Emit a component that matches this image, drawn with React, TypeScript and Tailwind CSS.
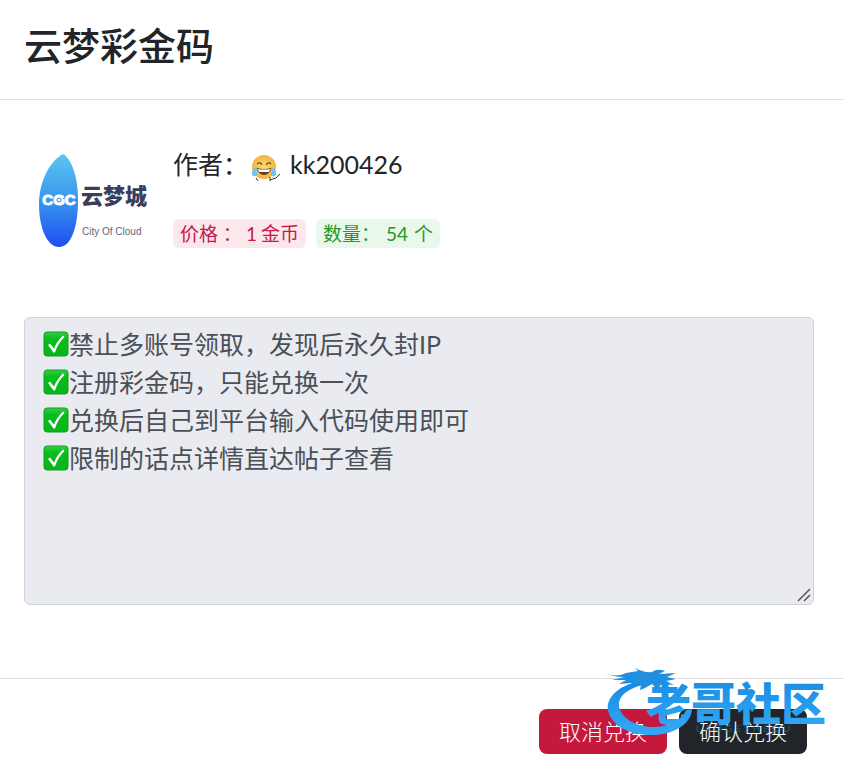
const rules = [
  "禁止多账号领取，发现后永久封IP",
  "注册彩金码，只能兑换一次",
  "兑换后自己到平台输入代码使用即可",
  "限制的话点详情直达帖子查看",
];

const CloudCityLogo = () => (
  <svg viewBox="0 0 112 100" className="w-28 h-[100px] shrink-0" role="img" aria-label="云梦城 City Of Cloud">
    <defs>
      <linearGradient id="drop" x1="0" y1="0" x2="0" y2="1">
        <stop offset="0" stopColor="#5cc6f0" />
        <stop offset="0.5" stopColor="#3795ee" />
        <stop offset="1" stopColor="#1f4df2" />
      </linearGradient>
    </defs>
    <path d="M27 4C36 9 42 28 42 50C42 80 34 97 23 97C11 97 3 78 3 54C3 30 15 10 27 4Z" fill="url(#drop)" />
    <text x="23" y="55" textAnchor="middle" fontSize="15" fontWeight="700" fill="#fff" stroke="#fff" className="font-['Liberation_Sans',sans-serif]">CGC</text>
    <circle cx="23" cy="50" r="4" fill="#fff" />
    <circle cx="23" cy="50" r="2" fill="none" stroke="#3b83e8" />
    <text x="45" y="54" fontSize="22" fontWeight="900" fill="#3a3e5c">云梦城</text>
    <text x="46" y="85" fontSize="10" fill="#62657c" className="font-['Liberation_Sans',sans-serif]">City Of Cloud</text>
  </svg>
);

const LaughingFace = () => (
  <svg viewBox="0 0 32 32" className="size-8" aria-hidden="true">
    <defs>
      <radialGradient id="face">
        <stop offset="0" stopColor="#fde07a" />
        <stop offset="1" stopColor="#f0b23f" />
      </radialGradient>
    </defs>
    <circle cx="14" cy="18" r="12" fill="url(#face)" />
    <path d="M7 15q3-3 5 1M16 16q3-4 5-1" fill="none" stroke="#8a5b22" strokeWidth="1.5" />
    <path d="M7 19q7 2 14 0q-1 7-7 7t-7-7Z" fill="#6b3d1d" />
    <path d="M8 20q6 1 12 0l-1 3H9Z" fill="#fff" />
    <path d="M7 18q-6 2-5 8q4 3 5-1ZM21 18q6 2 5 8q-4 3-5-1Z" fill="#72c4ed" />
    <path d="M20 32v-4M20 31q7-1 10-6M6 29l2 3" fill="none" stroke="#333" />
  </svg>
);

const CheckMark = () => (
  <svg viewBox="0 0 26 26" className="size-[26px]" aria-hidden="true">
    <defs>
      <linearGradient id="check" x1="0" y1="0" x2="0" y2="1">
        <stop offset="0" stopColor="#35cf45" />
        <stop offset="0.3" stopColor="#06bd1b" />
        <stop offset="1" stopColor="#08b51a" />
      </linearGradient>
    </defs>
    <rect x="1" y="1" width="24" height="24" rx="3" fill="url(#check)" stroke="#159b25" />
    <path d="M5 14L7 12.5L11 17.5Q14 10 20 4.5L21.5 6Q15 12 12 21.5H10.5Z" fill="#fff" />
  </svg>
);

const Watermark = () => (
  <svg viewBox="0 0 226 84" className="absolute right-[14px] top-[-15px] w-[226px] h-[84px] pointer-events-none" aria-hidden="true">
    <defs>
      <linearGradient id="water" x1="0" y1="0" x2="0" y2="1">
        <stop offset="0" stopColor="#168be3" />
        <stop offset="1" stopColor="#35a9f5" />
      </linearGradient>
    </defs>
    <path d="M33 18C14 22 2 34 4 46C7 62 27 72 50 71C71 70 87 60 88 45L82 46C78 56 67 62 51 63C33 63 17 55 15 42C14 31 26 24 39 21Z" fill="url(#water)" />
    <path d="M1 9Q11 14 22 9L34 7L31 4Q40 9 48 8Q53 4 61 7L55 10L72 9L63 13L72 15L62 17L70 21L58 20L53 25L48 20L41 24L36 26L37 20L27 19L15 20L22 16L8 16L20 13Q8 13 1 9Z" fill="#218fdf" />
    <text x="42" y="57" fontSize="45" fontWeight="900" fill="url(#water)">老哥社区</text>
    <text x="92" y="68" fontSize="10" fontWeight="700" letterSpacing="3" fill="#1d6fae" opacity="0.5">LAOGESHEQU</text>
  </svg>
);

const App = () => {
  return (
    <div className="min-h-screen bg-white text-[#212529] font-['Lato','Noto_Sans_CJK_SC',sans-serif]">
      <header className="flex items-center h-[100px] px-6 pb-2.5 border-b border-[#dee2e6]">
        <h1 className="text-[38px] leading-[48px] font-medium">云梦彩金码</h1>
      </header>

      <main className="px-6 pt-[47px] pb-[73px]">
        <section className="flex items-start gap-[25px] pl-3">
          <div className="pt-[3px]">
            <CloudCityLogo />
          </div>
          <div>
            <div className="flex items-center h-9 text-[25px]">
              <span className="w-[77px]">作者：</span>
              <LaughingFace />
              <span className="ml-2">kk200426</span>
            </div>
            <div className="flex gap-2.5 mt-9 text-[19px] leading-[29px]">
              <span className="flex gap-1 px-[7px] rounded-md bg-[#fbe7ec] text-[#c61a48]">
                <span>价格 ：</span>
                <span>1</span>
                <span>金币</span>
              </span>
              <span className="flex gap-1.5 px-[7px] rounded-md bg-[#eaf7eb] text-[#229a27]">
                <span>数量：</span>
                <span>54</span>
                <span>个</span>
              </span>
            </div>
          </div>
        </section>

        <div className="relative mt-[67px] mr-1.5">
          <textarea
            aria-label="兑换说明"
            readOnly
            defaultValue={rules.join("\n")}
            className="block w-full h-72 pl-11 pr-[18px] py-[7px] border border-[#ced4da] rounded-md bg-[#eaebf0] text-[#4a5057] text-[25px] leading-[38px] resize-none"
          />
          <div className="absolute left-[19px] top-2 pointer-events-none">
            {rules.map((rule) => (
              <div key={rule} className="flex items-center h-[38px]">
                <CheckMark />
              </div>
            ))}
          </div>
          <svg viewBox="0 0 16 16" className="absolute right-0.5 bottom-0.5 size-4 pointer-events-none" aria-hidden="true">
            <path d="M2 14L14 2M8 14L14 8" fill="none" stroke="#555" strokeWidth="1.5" />
          </svg>
        </div>
      </main>

      <footer className="relative flex justify-end gap-3 px-[37px] pt-[30px] pb-2.5 border-t border-[#dee2e6] text-[22px] text-white">
        <button type="button" className="w-32 h-[45px] rounded-lg bg-[#c5183d] font-light">取消兑换</button>
        <button type="button" className="w-32 h-[45px] rounded-lg bg-[#212529] font-light">确认兑换</button>
        <Watermark />
      </footer>
    </div>
  );
};

export default App;
